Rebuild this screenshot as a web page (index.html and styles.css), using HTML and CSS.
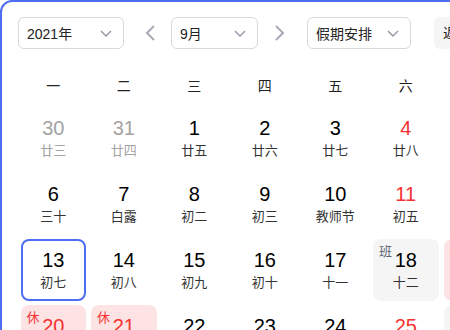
FILE: index.html
```html
<!DOCTYPE html>
<html lang="zh-CN">
<head>
    <meta charset="UTF-8">
    <title>万年历</title>
    <link rel="stylesheet" href="styles.css">
</head>
<body>
<div class="calendar">
    <div class="toolbar">
        <div class="select year">
            <span>2021年</span>
            <svg class="chevron" width="12" height="7" viewBox="0 0 12 7"><path d="M1 1l5 5 5-5"/></svg>
        </div>
        <svg class="arrow prev" width="10" height="16" viewBox="0 0 10 16"><path d="M9 1L2 8l7 7"/></svg>
        <div class="select month">
            <span>9月</span>
            <svg class="chevron" width="12" height="7" viewBox="0 0 12 7"><path d="M1 1l5 5 5-5"/></svg>
        </div>
        <svg class="arrow next" width="10" height="16" viewBox="0 0 10 16"><path d="M1 1l7 7-7 7"/></svg>
        <div class="select holiday">
            <span>假期安排</span>
            <svg class="chevron" width="12" height="7" viewBox="0 0 12 7"><path d="M1 1l5 5 5-5"/></svg>
        </div>
        <div class="today">返回今天</div>
    </div>

    <div class="week">
        <span>一</span><span>二</span><span>三</span><span>四</span><span>五</span><span>六</span><span>日</span>
    </div>

    <div class="days">
        <div class="day other"><b>30</b><i>廿三</i></div>
        <div class="day other"><b>31</b><i>廿四</i></div>
        <div class="day"><b>1</b><i>廿五</i></div>
        <div class="day"><b>2</b><i>廿六</i></div>
        <div class="day"><b>3</b><i>廿七</i></div>
        <div class="day weekend"><b>4</b><i>廿八</i></div>
        <div class="day weekend"><b>5</b><i>廿九</i></div>

        <div class="day"><b>6</b><i>三十</i></div>
        <div class="day"><b>7</b><i>白露</i></div>
        <div class="day"><b>8</b><i>初二</i></div>
        <div class="day"><b>9</b><i>初三</i></div>
        <div class="day"><b>10</b><i>教师节</i></div>
        <div class="day weekend"><b>11</b><i>初五</i></div>
        <div class="day weekend"><b>12</b><i>初六</i></div>

        <div class="day selected"><b>13</b><i>初七</i></div>
        <div class="day"><b>14</b><i>初八</i></div>
        <div class="day"><b>15</b><i>初九</i></div>
        <div class="day"><b>16</b><i>初十</i></div>
        <div class="day"><b>17</b><i>十一</i></div>
        <div class="day work"><em>班</em><b>18</b><i>十二</i></div>
        <div class="day rest"><em>休</em><b>19</b><i>十三</i></div>

        <div class="day rest"><em>休</em><b>20</b><i>十四</i></div>
        <div class="day rest"><em>休</em><b>21</b><i>中秋节</i></div>
        <div class="day"><b>22</b><i>十六</i></div>
        <div class="day"><b>23</b><i>秋分</i></div>
        <div class="day"><b>24</b><i>十八</i></div>
        <div class="day weekend"><b>25</b><i>十九</i></div>
        <div class="day work"><em>班</em><b>26</b><i>二十</i></div>
    </div>
</div>
</body>
</html>
```

FILE: styles.css
```css
html, body {
    margin: 0;
    overflow: hidden;
}
body {
    background-color: #fff;
    font-family: 'Liberation Sans', 'Noto Sans CJK SC', sans-serif;
    color: #222;
}
.calendar {
    width: 530px;
    height: 420px;
    border: 2px solid #4e6ef2;
    border-radius: 12px;
    padding: 15px 0 0 16px;
}
.toolbar {
    display: flex;
    align-items: center;
    height: 32px;
}
.select {
    box-sizing: border-box;
    height: 32px;
    display: flex;
    align-items: center;
    justify-content: space-between;
    padding: 0 11px 0 8px;
    border: 1px solid #d7d9e0;
    border-radius: 6px;
    font-size: 14px;
    color: #222;
}
.select.year {
    width: 106px;
}
.select.month {
    width: 87px;
    margin-left: 16px;
}
.select.holiday {
    width: 104px;
    margin-left: 22px;
}
.chevron path {
    fill: none;
    stroke: #9195a3;
    stroke-width: 1.4;
}
.arrow path {
    fill: none;
    stroke: #a8abb6;
    stroke-width: 2;
}
.arrow.prev {
    margin-left: 21px;
}
.arrow.next {
    margin-left: 17px;
}
.today {
    height: 32px;
    line-height: 32px;
    margin-left: 23px;
    padding: 0 9px;
    border-radius: 6px;
    background-color: #f5f5f6;
    font-size: 14px;
    white-space: nowrap;
}
.week, .days {
    display: grid;
    grid-template-columns: repeat(7, 65.5px);
    column-gap: 5px;
    margin-left: 2.5px;
}
.week {
    padding-top: 28px;
    line-height: 18px;
    font-size: 14px;
    text-align: center;
    color: #222;
}
.days {
    margin-top: 12px;
    row-gap: 4px;
}
.day {
    position: relative;
    box-sizing: border-box;
    height: 62px;
    padding-top: 10px;
    border-radius: 8px;
    text-align: center;
}
.day b {
    display: block;
    font-weight: normal;
    font-size: 20px;
    line-height: 23px;
    color: #000;
}
.day i {
    display: block;
    font-style: normal;
    font-size: 13px;
    line-height: 20px;
    margin-top: 1px;
    color: #333;
}
.day em {
    position: absolute;
    top: 6px;
    left: 6px;
    font-style: normal;
    font-size: 13px;
    line-height: 14px;
}
.day.other b, .day.other i {
    color: #a3a3a3;
}
.day.weekend b {
    color: #f73131;
}
.day.selected {
    border: 2px solid #4e6ef2;
    padding-top: 8px;
}
.day.rest {
    background-color: #fde3e4;
}
.day.rest b, .day.rest em {
    color: #f73131;
}
.day.work {
    background-color: #f5f5f6;
}
.day.work em {
    color: #626675;
}
```
